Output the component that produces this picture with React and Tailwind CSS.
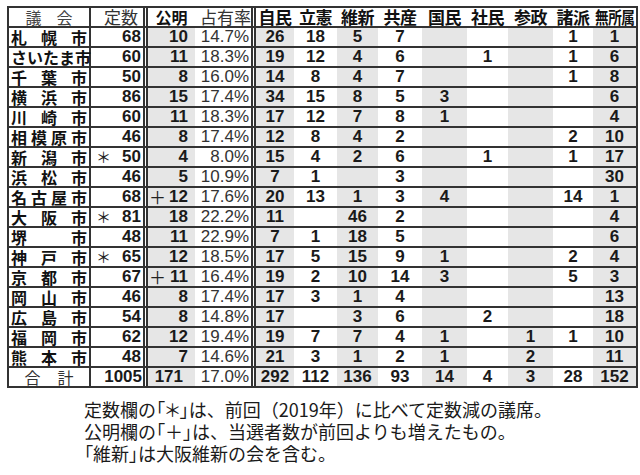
import React from "react";

const NUM = "font-['Liberation_Sans_Narrow','Arial_Narrow',sans-serif] font-bold text-[17px] leading-[18px] text-[#1a1a1a]";
const PCT = "font-['Liberation_Sans_Narrow','Arial_Narrow',sans-serif] text-[17px] leading-[18px] text-[#333]";
const JP = "font-['Noto_Sans_CJK_JP',sans-serif]";
const G = "bg-[#e6e6e6]";

const PARTY_W = [
  "w-[38px]",
  "w-[43px]",
  "w-[41px]",
  "w-[44px]",
  "w-[45px]",
  "w-[41px]",
  "w-[45px]",
  "w-[40px]",
  "w-[43px]",
];
const PARTY_SHADE = [true, false, true, false, true, false, true, false, true];
const PARTIES = ["自民", "立憲", "維新", "共産", "国民", "社民", "参政", "諸派", "無所属"];

const rows = [
  { n: ["札", "幌", "市"], t: "68", s: "", m: "", k: "10", p: "14.7%", v: ["26", "18", "5", "7", "", "", "", "1", "1"] },
  { n: ["さ", "い", "た", "ま", "市"], t: "60", s: "", m: "", k: "11", p: "18.3%", v: ["19", "12", "4", "6", "", "1", "", "1", "6"] },
  { n: ["千", "葉", "市"], t: "50", s: "", m: "", k: "8", p: "16.0%", v: ["14", "8", "4", "7", "", "", "", "1", "8"] },
  { n: ["横", "浜", "市"], t: "86", s: "", m: "", k: "15", p: "17.4%", v: ["34", "15", "8", "5", "3", "", "", "", "6"] },
  { n: ["川", "崎", "市"], t: "60", s: "", m: "", k: "11", p: "18.3%", v: ["17", "12", "7", "8", "1", "", "", "", "4"] },
  { n: ["相", "模", "原", "市"], t: "46", s: "", m: "", k: "8", p: "17.4%", v: ["12", "8", "4", "2", "", "", "", "2", "10"] },
  { n: ["新", "潟", "市"], t: "50", s: "＊", m: "", k: "4", p: "8.0%", v: ["15", "4", "2", "6", "", "1", "", "1", "17"] },
  { n: ["浜", "松", "市"], t: "46", s: "", m: "", k: "5", p: "10.9%", v: ["7", "1", "", "3", "", "", "", "", "30"] },
  { n: ["名", "古", "屋", "市"], t: "68", s: "", m: "＋", k: "12", p: "17.6%", v: ["20", "13", "1", "3", "4", "", "", "14", "1"] },
  { n: ["大", "阪", "市"], t: "81", s: "＊", m: "", k: "18", p: "22.2%", v: ["11", "", "46", "2", "", "", "", "", "4"] },
  { n: ["堺", "市"], t: "48", s: "", m: "", k: "11", p: "22.9%", v: ["7", "1", "18", "5", "", "", "", "", "6"] },
  { n: ["神", "戸", "市"], t: "65", s: "＊", m: "", k: "12", p: "18.5%", v: ["17", "5", "15", "9", "1", "", "", "2", "4"] },
  { n: ["京", "都", "市"], t: "67", s: "", m: "＋", k: "11", p: "16.4%", v: ["19", "2", "10", "14", "3", "", "", "5", "3"] },
  { n: ["岡", "山", "市"], t: "46", s: "", m: "", k: "8", p: "17.4%", v: ["17", "3", "1", "4", "", "", "", "", "13"] },
  { n: ["広", "島", "市"], t: "54", s: "", m: "", k: "8", p: "14.8%", v: ["17", "", "3", "6", "", "2", "", "", "18"] },
  { n: ["福", "岡", "市"], t: "62", s: "", m: "", k: "12", p: "19.4%", v: ["19", "7", "7", "4", "1", "", "1", "1", "10"] },
  { n: ["熊", "本", "市"], t: "48", s: "", m: "", k: "7", p: "14.6%", v: ["21", "3", "1", "2", "1", "", "2", "", "11"] },
];

const ROW = "flex h-[20px] border-b-2 border-[#333]";
const C1 = "w-[82px] h-full border-r-2 border-[#333] flex items-center";
const C2 = "w-[57px] h-full border-r-[5px] border-double border-[#333] flex items-center";
const C3 = "w-[47px] h-full flex items-center";
const C4 = "w-[61px] h-full border-r-[5px] border-double border-[#333] flex items-center";

function PartyCells({ values, header }) {
  return values.map((v, i) => (
    <div
      key={i}
      className={`${PARTY_W[i]} h-full flex items-center justify-center whitespace-nowrap ${
        !header && PARTY_SHADE[i] ? G : ""
      }`}
    >
      {header ? (
        <span
          className={`${JP} inline-block font-bold text-[17px] leading-[18px] text-[#111] ${
            i === 8 ? "scale-x-[0.8] tracking-[-0.5px]" : "tracking-[-0.5px]"
          }`}
        >
          {v}
        </span>
      ) : (
        <span className={NUM}>{v}</span>
      )}
    </div>
  ));
}

export default function App() {
  return (
    <div className="w-[640px] h-[475px] bg-white overflow-hidden">
      <div className="ml-[7px] mt-[6px] w-[631px] border-2 border-[#333]">
        {/* header */}
        <div className={ROW}>
          <div className={`${C1} justify-center gap-[15px]`}>
            <span className={`${JP} text-[16px] leading-[18px] text-[#444]`}>議</span>
            <span className={`${JP} text-[16px] leading-[18px] text-[#444]`}>会</span>
          </div>
          <div className={`${C2} justify-center pl-[8px]`}>
            <span className={`${JP} text-[17px] leading-[18px] text-[#333]`}>定数</span>
          </div>
          <div className={`${C3} justify-center`}>
            <span className={`${JP} font-bold text-[16px] leading-[18px] text-[#111]`}>公明</span>
          </div>
          <div className={`${C4} justify-end pr-[0px]`}>
            <span className={`${JP} text-[17px] leading-[18px] text-[#333]`}>占有率</span>
          </div>
          <PartyCells values={PARTIES} header />
        </div>

        {rows.map((r, idx) => (
          <div key={idx} className={ROW}>
            <div className={`${C1} justify-between px-[2px]`}>
              {r.n.map((c, j) => (
                <span key={j} className={`${JP} font-bold text-[16px] leading-[18px] text-[#111]`}>
                  {c}
                </span>
              ))}
            </div>
            <div className={`${C2} justify-between pl-[5px] pr-[2px]`}>
              <span className={`${JP} text-[15px] leading-[18px] text-[#222]`}>{r.s}</span>
              <span className={NUM}>{r.t}</span>
            </div>
            <div className={`${C3} ${G} justify-between pl-[1px] pr-[7px]`}>
              <span className={`${JP} text-[17px] leading-[18px] text-[#222]`}>{r.m}</span>
              <span className={NUM}>{r.k}</span>
            </div>
            <div className={`${C4} justify-end pr-[2px]`}>
              <span className={PCT}>{r.p}</span>
            </div>
            <PartyCells values={r.v} />
          </div>
        ))}

        {/* total */}
        <div className="flex h-[18px]">
          <div className={`${C1} justify-center gap-[17px]`}>
            <span className={`${JP} text-[16px] leading-[18px] text-[#333]`}>合</span>
            <span className={`${JP} text-[16px] leading-[18px] text-[#333]`}>計</span>
          </div>
          <div className={`${C2} justify-end pr-[1px]`}>
            <span className={NUM}>1005</span>
          </div>
          <div className={`${C3} ${G} justify-end pr-[12px]`}>
            <span className={NUM}>171</span>
          </div>
          <div className={`${C4} justify-end pr-[2px]`}>
            <span className={PCT}>17.0%</span>
          </div>
          <PartyCells values={["292", "112", "136", "93", "14", "4", "3", "28", "152"]} />
        </div>
      </div>

      <div className={`${JP} pl-[84px] mt-[10px] text-[18px] leading-[22px] text-[#1a1a1a]`}>
        <p>
          定数欄の<span className="[font-feature-settings:'palt']">「＊」</span>は、前回（2019年）に比べて定数減の議席。
        </p>
        <p>
          公明欄の<span className="[font-feature-settings:'palt']">「＋」</span>は、当選者数が前回よりも増えたもの。
        </p>
        <p>
          <span className="[font-feature-settings:'palt']">「</span>維新<span className="[font-feature-settings:'palt']">」</span>は大阪維新の会を含む。
        </p>
      </div>
    </div>
  );
}
